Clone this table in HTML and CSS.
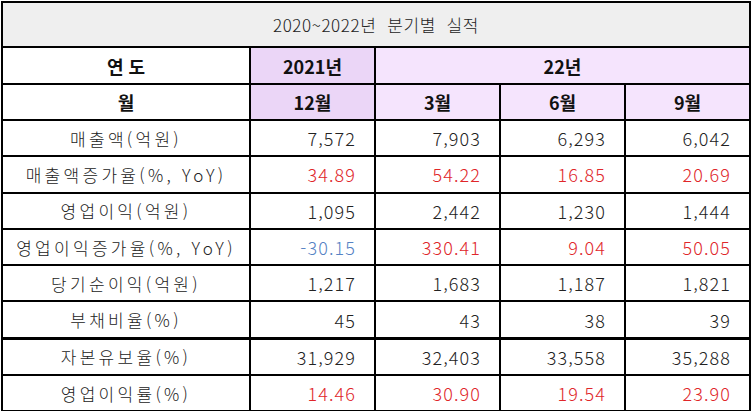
FILE: index.html
```html
<!DOCTYPE html>
<html lang="ko">
<head>
<meta charset="utf-8">
<link rel="stylesheet" href="styles.css">
</head>
<body>
<table class="perf">
  <colgroup>
    <col class="c-label"><col class="c-num"><col class="c-num"><col class="c-num"><col class="c-num">
  </colgroup>
  <tr class="r-title"><td colspan="5" class="title">2020~2022년&nbsp;&nbsp;분기별&nbsp;&nbsp;실적</td></tr>
  <tr class="r-head">
    <td class="head">연 도</td>
    <td class="head y21">2021년</td>
    <td class="head y22" colspan="3">22년</td>
  </tr>
  <tr class="r-head2">
    <td class="head">월</td>
    <td class="head y21">12월</td>
    <td class="head y22">3월</td>
    <td class="head y22">6월</td>
    <td class="head y22">9월</td>
  </tr>
  <tr class="r-data"><td class="label">매출액(억원)</td><td class="num">7,572</td><td class="num">7,903</td><td class="num">6,293</td><td class="num">6,042</td></tr>
  <tr class="r-data"><td class="label">매출액증가율(%, YoY)</td><td class="num red">34.89</td><td class="num red">54.22</td><td class="num red">16.85</td><td class="num red">20.69</td></tr>
  <tr class="r-data"><td class="label">영업이익(억원)</td><td class="num">1,095</td><td class="num">2,442</td><td class="num">1,230</td><td class="num">1,444</td></tr>
  <tr class="r-data"><td class="label">영업이익증가율(%, YoY)</td><td class="num blue">-30.15</td><td class="num red">330.41</td><td class="num red">9.04</td><td class="num red">50.05</td></tr>
  <tr class="r-data"><td class="label">당기순이익(억원)</td><td class="num">1,217</td><td class="num">1,683</td><td class="num">1,187</td><td class="num">1,821</td></tr>
  <tr class="r-data r-split"><td class="label">부채비율(%)</td><td class="num">45</td><td class="num">43</td><td class="num">38</td><td class="num">39</td></tr>
  <tr class="r-data"><td class="label">자본유보율(%)</td><td class="num">31,929</td><td class="num">32,403</td><td class="num">33,558</td><td class="num">35,288</td></tr>
  <tr class="r-data"><td class="label">영업이익률(%)</td><td class="num red">14.46</td><td class="num red">30.90</td><td class="num red">19.54</td><td class="num red">23.90</td></tr>
</table>
</body>
</html>
```

FILE: styles.css
```css
html, body {
  margin: 0;
  padding: 0;
  background: #ffffff;
}

.perf {
  border-collapse: collapse;
  table-layout: fixed;
  width: 750px;
  margin: 1px 0 0 1px;
  font-family: "Noto Sans CJK KR", "Noto Sans", sans-serif;
  color: #1a1a1a;
}

.c-label { width: 248px; }
.c-num { width: 125px; }

.perf td {
  border: 2px solid #000;
  padding: 0;
  white-space: nowrap;
  overflow: hidden;
}

.r-title td { height: 43px; }
.r-head td { height: 35px; }
.r-head2 td { height: 34px; }
.r-data td { height: 34.3px; }
.r-split td { border-bottom-width: 3px; }

.title {
  background: #efefef;
  text-align: center;
  font-size: 17px;
  font-weight: 300;
  color: #222;
  letter-spacing: 0.6px;
}

.head {
  text-align: center;
  font-size: 18px;
  font-weight: 700;
  color: #111;
  background: #fff;
}

.y21 { background: #ebd6f7; }
.y22 { background: #f5e4fd; }

.label {
  text-align: center;
  font-size: 17px;
  font-weight: 300;
  letter-spacing: 3.3px;
  color: #222;
}

.num {
  text-align: right;
  padding-right: 18px !important;
  font-size: 18px;
  font-weight: 300;
  letter-spacing: 1.1px;
  color: #222;
}

.red { color: #e0262a; }
.blue { color: #5682c4; }
```
